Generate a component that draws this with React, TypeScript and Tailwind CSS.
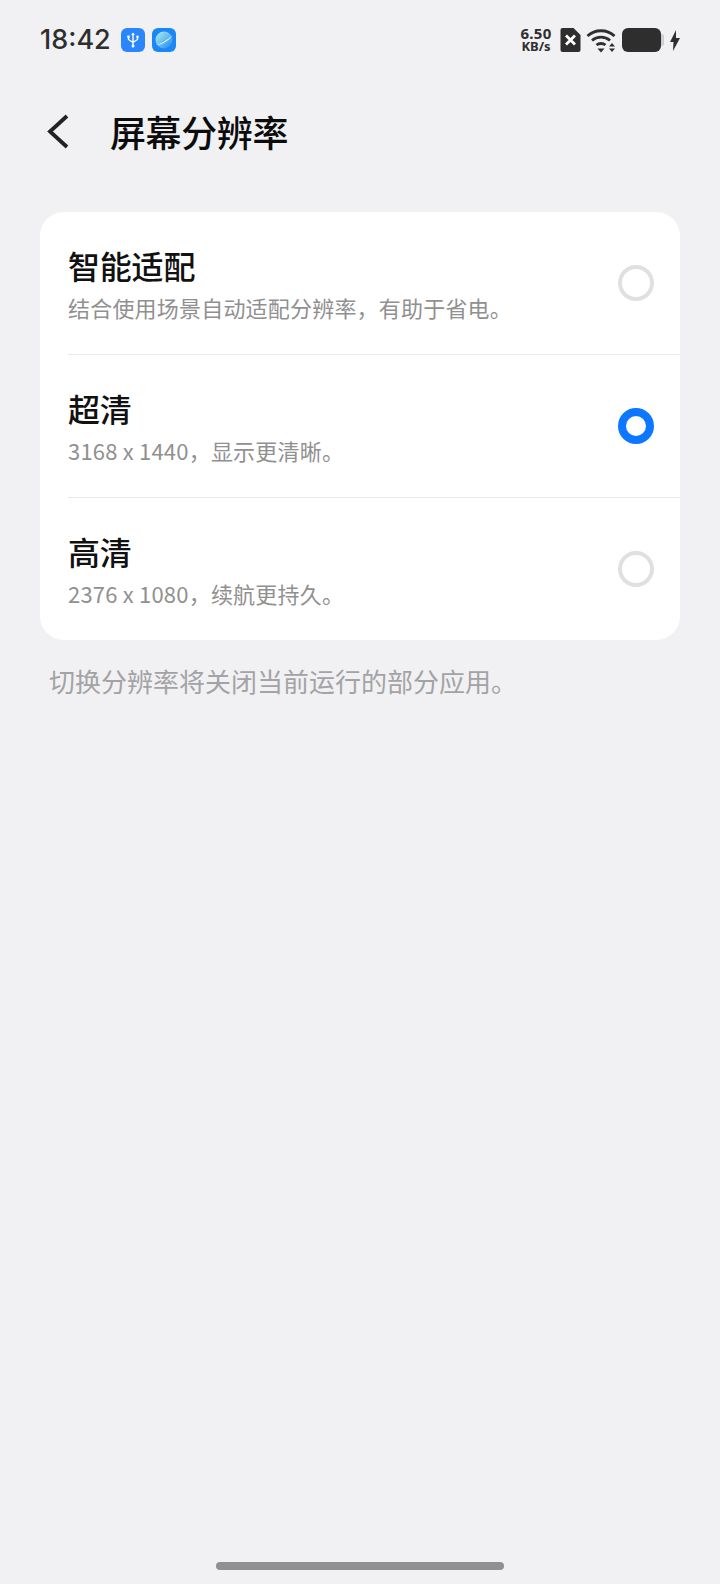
import React from "react";

const CJK = "font-['Noto_Sans_CJK_SC','Noto_Sans',sans-serif]";

const options = [
  { title: "智能适配", desc: "结合使用场景自动适配分辨率，有助于省电。", checked: false },
  { title: "超清", desc: "3168 x 1440，显示更清晰。", checked: true },
  { title: "高清", desc: "2376 x 1080，续航更持久。", checked: false },
];

function UsbBadge() {
  return (
    <div className="w-6 h-6 rounded-[6px] bg-[#2c86fb] flex items-center justify-center">
      <svg width="14" height="16" viewBox="0 0 14 16" fill="none" stroke="#fff" strokeWidth="1.400">
        <path d="M7 2v12M2.500 5.500V7.500L7 10.500L11.500 7.500V5.500" />
        <path d="M5 3L7 0.500L9 3z" fill="#fff" stroke="none" />
        <rect x="1.300" y="3.500" width="2.400" height="2.400" fill="#fff" stroke="none" />
        <circle cx="11.500" cy="4.700" r="1.300" fill="#fff" stroke="none" />
        <circle cx="7" cy="14" r="1.500" fill="#fff" stroke="none" />
      </svg>
    </div>
  );
}

function PlanetBadge() {
  return (
    <div className="w-6 h-6 rounded-[6px] bg-[#1b86f5] flex items-center justify-center">
      <svg width="20" height="20" viewBox="0 0 20 20">
        <defs>
          <linearGradient id="planet" x1="0.100" y1="0.100" x2="0.900" y2="0.900">
            <stop offset="0" stopColor="#a5e6e6" />
            <stop offset="0.600" stopColor="#5cb6f2" />
            <stop offset="1" stopColor="#2a8ef2" />
          </linearGradient>
        </defs>
        <circle cx="10" cy="10" r="8.500" fill="url(#planet)" />
        <path d="M1.500 15C7 14 14 10 18.500 5C15 10.500 8 15 1.500 15z" fill="#fff" />
      </svg>
    </div>
  );
}

function StatusBar() {
  return (
    <div className="h-[80px] flex items-center justify-between pl-10 pr-10">
      <div className="flex items-center">
        <span className="w-[71px] font-['Inter',sans-serif] text-[27px] font-medium text-[#2e2e2e] whitespace-nowrap">18:42</span>
        <div className="ml-[10px] flex gap-[7px]">
          <UsbBadge />
          <PlanetBadge />
        </div>
      </div>
      <div className="flex items-center">
        <div className="w-[32px] font-['Noto_Sans',sans-serif] font-bold text-[#2e2e2e] text-center leading-[13px] mr-2 whitespace-nowrap flex flex-col items-center">
          <div className="text-[15px] tracking-[0.3px]">6.50</div>
          <div className="text-[13px]">KB/s</div>
        </div>
        <svg width="21" height="24" viewBox="0 0 20 24" className="mr-[5px]">
          <path d="M2 0h11l7 7v15a2 2 0 0 1-2 2H2a2 2 0 0 1-2-2V2a2 2 0 0 1 2-2z" fill="#2e2e2e" />
          <path d="M5.500 7.500l9 9M14.500 7.500l-9 9" stroke="#fff" strokeWidth="2.800" />
        </svg>
        <svg width="31" height="25" viewBox="0 0 31 25" fill="none" className="mr-[5px]">
          <path d="M1.500 8C9 1 21 1 28.500 8" stroke="#2e2e2e" strokeWidth="2.800" />
          <path d="M6 12.500C11 8 19 8 24 12.500" stroke="#2e2e2e" strokeWidth="2.800" />
          <path d="M10.500 17C13 15 17 15 19.500 17" stroke="#2e2e2e" strokeWidth="2.800" />
          <path d="M11.500 20.500h7L15 24.500z" fill="#2e2e2e" />
          <path d="M23 18.500l3-3.500 3 3.500zM23 20.500h6l-3 3.500z" fill="#2e2e2e" />
        </svg>
        <div className="w-[39px] h-6 rounded-[6px] bg-[#2e2e2e]" />
        <div className="w-[3px] h-[12px] rounded-r-[2px] bg-[#cfcfcf] mr-[6px]" />
        <svg width="10" height="21" viewBox="0 0 10 21">
          <path d="M6 0L0 12h3.500L3 21l7-13H6z" fill="#2e2e2e" />
        </svg>
      </div>
    </div>
  );
}

function Radio({ checked }: { checked: boolean }) {
  return checked ? (
    <div className="w-9 h-9 rounded-full border-[8px] border-[#0e77ff] bg-white" />
  ) : (
    <div className="w-9 h-9 rounded-full border-[4px] border-[#e0e0e0] bg-white" />
  );
}

export default function App() {
  return (
    <div className={`w-[720px] h-[1584px] bg-[#f1f1f3] flex flex-col ${CJK}`}>
      <StatusBar />
      <div className="h-[132px] flex items-start pt-[21px]">
        <svg width="24" height="38" viewBox="0 0 24 38" fill="none" className="ml-[46px] mt-[12px]">
          <path d="M21 3L4 18.500L21 34" stroke="#222" strokeWidth="3.800" />
        </svg>
        <h1 className="ml-[40px] text-[36px] leading-[60px] font-medium tracking-[-0.4px] text-[#0c0c0c]">屏幕分辨率</h1>
      </div>
      <div className="mx-10 bg-white rounded-[24px] overflow-hidden">
        {options.map((o, i) => (
          <div key={o.title} className={`ml-[28px] pr-[26px] flex items-center justify-between ${i > 0 ? "h-[143px] border-t border-[#e9e9e9]" : "h-[142px]"}`}>
            <div>
              <div className="text-[32px] leading-[44px] font-medium tracking-[-0.2px] text-[#111]">{o.title}</div>
              <div className="text-[22px] leading-[34px] tracking-[0.2px] text-[#909090] mt-[3px]">{o.desc}</div>
            </div>
            <Radio checked={o.checked} />
          </div>
        ))}
      </div>
      <p className="ml-[49px] mt-[21px] text-[26px] leading-[40px] text-[#a3a3a5]">切换分辨率将关闭当前运行的部分应用。</p>
      <div className="mt-auto mb-[14px] mx-auto w-[288px] h-2 rounded-full bg-[#909090]" />
    </div>
  );
}
